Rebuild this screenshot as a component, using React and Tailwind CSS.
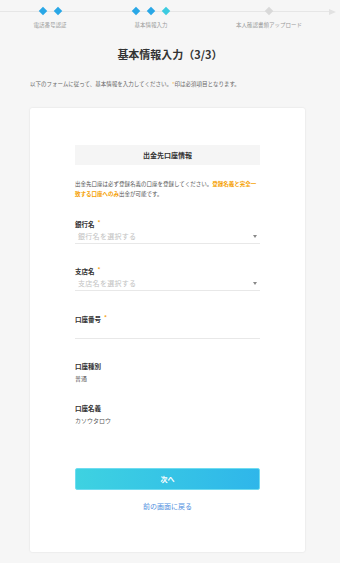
import React from "react";

const font = { fontFamily: '"Noto Sans CJK JP", "Noto Sans", sans-serif' };

function Diamond({ color }) {
  return <span className={`block w-[6px] h-[6px] rotate-45 ${color}`} />;
}

function Step({ width, label, children }) {
  return (
    <div className={`flex flex-col items-center ${width}`}>
      <div className="flex items-center gap-[9px] h-[22px]">{children}</div>
      <div className="text-[5.5px] leading-[6px] text-[#9a9a9a]">{label}</div>
    </div>
  );
}

function Req() {
  return <span className="ml-[3px] text-[6px] text-[#f5a623] relative -top-[2px]">*</span>;
}

function SelectField({ label, placeholder }) {
  return (
    <div>
      <div className="text-[6.5px] leading-[9px] font-bold text-[#333]">
        {label}
        <Req />
      </div>
      <div className="flex items-center justify-between h-[15px] border-b border-[#e8e8e8] pl-[3px] pr-[3px]">
        <span className="text-[7px] text-[#c2c2c2] tracking-[0.3px]">{placeholder}</span>
        <span className="block w-0 h-0 border-l-[2.5px] border-r-[2.5px] border-t-[3px] border-l-transparent border-r-transparent border-t-[#888]" />
      </div>
    </div>
  );
}

function InfoRow({ label, value }) {
  return (
    <div>
      <div className="text-[6.5px] leading-[9px] font-bold text-[#333]">{label}</div>
      <div className="mt-[3px] text-[6px] leading-[9px] text-[#555]">{value}</div>
    </div>
  );
}

export default function App() {
  return (
    <div className="w-[340px] h-[563px] bg-[#f6f6f6] overflow-hidden" style={font}>
      {/* Progress */}
      <div className="relative h-[40px]">
        <div className="absolute left-0 right-[8px] top-[11px] h-px bg-[#e6e6e6]" />
        <span className="absolute right-[4px] top-[8.5px] w-0 h-0 border-t-[3px] border-b-[3px] border-l-[7px] border-t-transparent border-b-transparent border-l-[#e2e2e2]" />
        <div className="relative flex">
          <Step width="w-[100px]" label="電話番号認証">
            <Diamond color="bg-[#29a7e6]" />
            <Diamond color="bg-[#29a7e6]" />
          </Step>
          <Step width="w-[102px]" label="基本情報入力">
            <Diamond color="bg-[#29a7e6]" />
            <Diamond color="bg-[#29a7e6]" />
            <Diamond color="bg-[#3ccbe0]" />
          </Step>
          <Step width="w-[134px]" label="本人確認書類アップロード">
            <Diamond color="bg-[#d9d9d9]" />
          </Step>
        </div>
      </div>

      {/* Title */}
      <h1 className="mt-[6px] text-center text-[11px] leading-[16px] font-bold text-[#333]">
        基本情報入力（3/3）
      </h1>
      <p className="mt-[18px] pl-[30px] text-[5.5px] leading-[8px] text-[#666]">
        以下のフォームに従って、基本情報を入力してください。<span className="text-[#f5a623]">*</span>
        印は必須項目となります。
      </p>

      {/* Card */}
      <div className="mt-[20px] ml-[30px] w-[275px] bg-white rounded-[2px] shadow-[0_0_2px_rgba(0,0,0,0.12)] px-[45px] pt-[37px] pb-[41px]">
        <div className="h-[20px] bg-[#f5f5f5] flex items-center justify-center text-[7px] font-bold text-[#333]">
          出金先口座情報
        </div>
        <p className="mt-[15px] text-[5.5px] leading-[9.5px] text-[#555]">
          出金先口座は必ず登録名義の口座を登録してください。
          <span className="font-bold text-[#f5a000]">登録名義と完全一致する口座へのみ</span>
          出金が可能です。
        </p>

        <div className="mt-[21px]">
          <SelectField label="銀行名" placeholder="銀行名を選択する" />
        </div>
        <div className="mt-[23px]">
          <SelectField label="支店名" placeholder="支店名を選択する" />
        </div>

        <div className="mt-[24px]">
          <div className="text-[6.5px] leading-[9px] font-bold text-[#333]">
            口座番号
            <Req />
          </div>
          <div className="h-[15px] border-b border-[#e8e8e8]" />
        </div>

        <div className="mt-[23px]">
          <InfoRow label="口座種別" value="普通" />
        </div>
        <div className="mt-[21px]">
          <InfoRow label="口座名義" value="カソウタロウ" />
        </div>

        <button className="mt-[43px] w-full h-[22px] rounded-[2px] border border-[#6fdcf0] bg-gradient-to-r from-[#3ed2e1] to-[#2fb6ea] text-white text-[7px] font-bold">
          次へ
        </button>
        <div className="mt-[12px] text-center text-[7px] leading-[9px] text-[#4f8fe0]">
          前の画面に戻る
        </div>
      </div>
    </div>
  );
}
